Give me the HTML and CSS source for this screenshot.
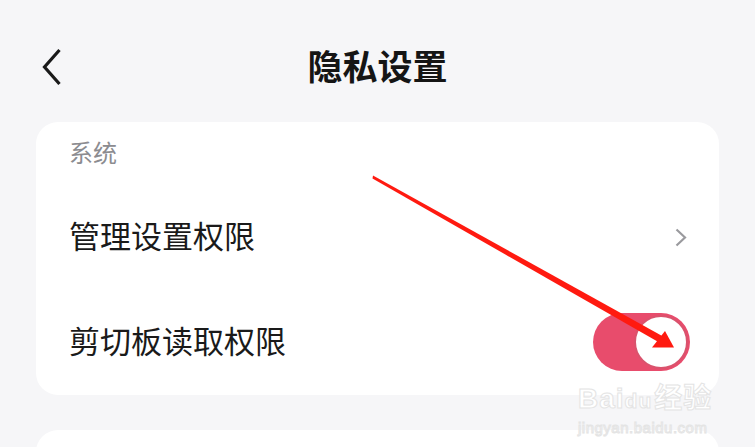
FILE: index.html
```html
<!DOCTYPE html>
<html>

<head>
  <meta name="viewport" content="width=device-width, initial-scale=1.0">
  <link rel="stylesheet" href="styles.css">
</head>

<body>
  <div class="page">
    <!-- Top bar -->
    <div class="header">
      <svg class="back" width="24" height="40" viewBox="0 0 24 40">
        <path d="M18.5 4 L3.5 21 L18.5 38" fill="none" stroke="#1a1a1a" stroke-width="3.2" stroke-linejoin="miter"/>
      </svg>
      <h1 class="title">隐私设置</h1>
      <div></div>
    </div>

    <!-- System section -->
    <div class="card">
      <div class="section-label">系统</div>

      <div class="row">
        <span class="row-text">管理设置权限</span>
        <svg class="chevron" width="14" height="22" viewBox="0 0 14 22">
          <path d="M2.5 2.5 L11 10.5 L2.5 18.5" fill="none" stroke="#9a9a9e" stroke-width="2.2"/>
        </svg>
      </div>

      <div class="row">
        <span class="row-text">剪切板读取权限</span>
        <div class="switch on">
          <div class="knob"></div>
        </div>
      </div>
    </div>

    <div class="card card-next"></div>
  </div>

  <!-- red annotation arrow -->
  <svg class="annotation" width="755" height="447" viewBox="0 0 755 447">
    <polygon points="373,175.5 372.5,178.5 661,343.5 664,337" fill="#ff1a10"/>
    <polygon points="674,347.5 665,331 652,347.5" fill="#ff1a10"/>
  </svg>

  <div class="watermark">
    <div class="wm-logo">Bai<span class="wm-du">du</span><span class="wm-cn">经验</span></div>
    <div class="wm-url">jingyan.baidu.com</div>
  </div>
</body>
</html>
```

FILE: styles.css
```css
body {
  margin: 0;
  background-color: #f6f6f8;
  font-family: "Noto Sans CJK SC", "Noto Sans", sans-serif;
}

.page {
  padding: 0 36px;
  height: 447px;
  overflow: hidden;
}

.header {
  display: grid;
  grid-template-columns: 1fr auto 1fr;
  align-items: center;
  height: 112px;
  padding-top: 10px;
}

.back {
  margin-left: 5px;
  display: block;
}

.title {
  margin: 0 0 3px;
  font-size: 35px;
  font-weight: 700;
  color: #151515;
  line-height: 1;
}

.card {
  background-color: #ffffff;
  border-radius: 22px;
  padding: 0 29px 0 33px;
}

.section-label {
  height: 63px;
  display: flex;
  align-items: center;
  font-size: 24px;
  color: #8c8c90;
  padding-bottom: 5px;
  box-sizing: border-box;
}

.row {
  display: flex;
  align-items: center;
  justify-content: space-between;
  height: 105px;
}

.row-text {
  font-size: 31px;
  color: #1a1a1a;
  margin-bottom: 6px;
}

.chevron {
  display: block;
  margin-right: 2px;
}

.switch {
  width: 97px;
  height: 58px;
  border-radius: 29px;
  background-color: #e84c6c;
  display: flex;
  align-items: center;
  justify-content: flex-end;
  padding: 0 2px;
  box-sizing: border-box;
  margin-bottom: 2px;
}

.knob {
  width: 54px;
  height: 54px;
  border-radius: 50%;
  background-color: #ffffff;
  border: 2px solid #d9536d;
  box-sizing: border-box;
}

.card-next {
  margin-top: 35px;
  height: 60px;
}

.annotation {
  position: absolute;
  left: 0;
  top: 0;
}

.watermark {
  position: absolute;
  left: 578px;
  top: 382px;
  font-family: "Liberation Sans", sans-serif;
  color: #ffffff;
  -webkit-text-stroke: 1px #e4e4e4;
  line-height: 1;
}

.wm-logo {
  font-size: 28px;
  font-weight: 700;
  letter-spacing: 1px;
}

.wm-du {
  font-size: 21px;
}

.wm-cn {
  font-family: "Noto Sans CJK SC", sans-serif;
  font-size: 28px;
  margin-left: 2px;
}

.wm-url {
  margin-top: 7px;
  font-size: 15px;
  letter-spacing: 0.5px;
}
```
